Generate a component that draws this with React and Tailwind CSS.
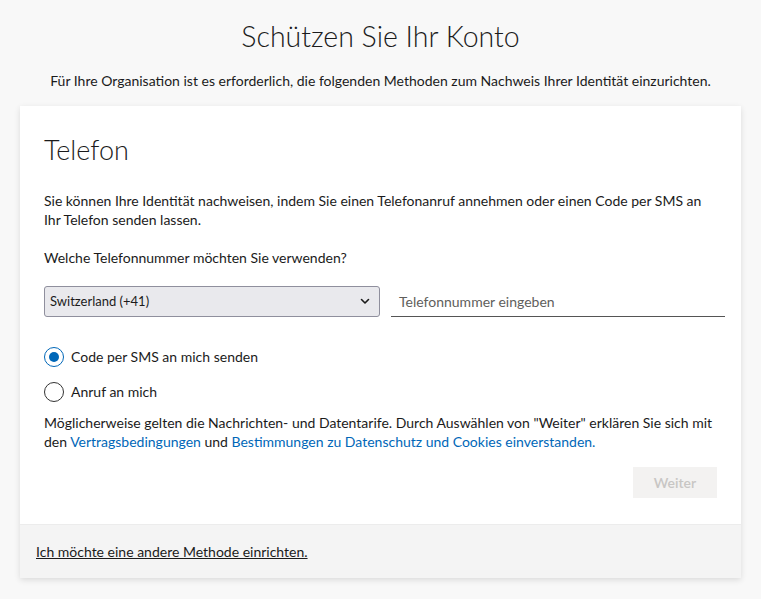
import { useState } from "react";

const FONT = { fontFamily: '"Segoe UI", Lato, "Liberation Sans", sans-serif' };

function Radio({ checked, label, onClick }) {
    return (
        <button type="button" onClick={onClick} className="flex items-center gap-[7px] text-left">
            <span
                className={
                    "flex h-[20px] w-[20px] items-center justify-center rounded-full border-[1.5px] " +
                    (checked ? "border-[#0067b8]" : "border-[#333]")
                }
            >
                {checked ? <span className="h-[10px] w-[10px] rounded-full bg-[#0067b8]" /> : null}
            </span>
            <span className="text-[14px] text-[#1b1b1b]">{label}</span>
        </button>
    );
}

export default function App() {
    const [method, setMethod] = useState("sms");

    return (
        <div className="min-h-[599px] bg-[#f8f8f8] text-[#1b1b1b]" style={FONT}>
            <div className="flex flex-col items-center pt-[18px]">
                <h1 className="text-[28.5px] font-light leading-[36px] text-[#1b1b1b]">Schützen Sie Ihr Konto</h1>
                <p className="mt-[18px] text-[14px] leading-[18px] text-[#1b1b1b]">
                    Für Ihre Organisation ist es erforderlich, die folgenden Methoden zum Nachweis Ihrer Identität einzurichten.
                </p>
            </div>

            <div className="mx-[20px] mt-[16px] bg-white shadow-[0_2px_6px_rgba(0,0,0,0.12)]">
                <div className="pb-[26px] pl-[24px] pr-[16px] pt-[25px]">
                    <h2 className="text-[27px] font-light leading-[38px]">Telefon</h2>

                    <p className="mt-[22px] max-w-[668px] text-[14px] leading-[19px]">
                        Sie können Ihre Identität nachweisen, indem Sie einen Telefonanruf annehmen oder einen Code per SMS an Ihr Telefon senden lassen.
                    </p>

                    <p className="mt-[19px] text-[14px] leading-[19px]">Welche Telefonnummer möchten Sie verwenden?</p>

                    <div className="mt-[19px] flex items-end gap-[11px]">
                        <div className="flex h-[31px] w-[336px] items-center justify-between rounded-[3px] border border-[#8f8f9d] bg-[#e9e9ed] pl-[5px] pr-[9px]">
                            <span className="text-[13px]">Switzerland (+41)</span>
                            <svg width="10" height="7" viewBox="0 0 10 7" fill="none">
                                <path d="M1.5 1.5 5 5 8.5 1.5" stroke="#1b1b1b" strokeWidth="1.6" strokeLinecap="round" strokeLinejoin="round" />
                            </svg>
                        </div>
                        <div className="flex h-[31px] flex-1 items-center border-b border-[#555] pl-[8px]">
                            <span className="text-[14px] text-[#605e5c]">Telefonnummer eingeben</span>
                        </div>
                    </div>

                    <div className="mt-[29px] flex flex-col gap-[14px]">
                        <Radio checked={method === "sms"} label="Code per SMS an mich senden" onClick={() => setMethod("sms")} />
                        <Radio checked={method === "call"} label="Anruf an mich" onClick={() => setMethod("call")} />
                    </div>

                    <p className="mt-[11px] max-w-[680px] text-[14px] leading-[19px]">
                        Möglicherweise gelten die Nachrichten- und Datentarife. Durch Auswählen von "Weiter" erklären Sie sich mit den{" "}
                        <span className="text-[#0067b8]">Vertragsbedingungen</span> und{" "}
                        <span className="text-[#0067b8]">Bestimmungen zu Datenschutz und Cookies einverstanden.</span>
                    </p>

                    <div className="mt-[16px] flex justify-end pr-[8px]">
                        <button
                            type="button"
                            disabled
                            className="h-[31px] w-[84px] bg-[#f3f2f1] text-[14px] font-semibold text-[#c8c6c4]"
                        >
                            Weiter
                        </button>
                    </div>
                </div>

                <div className="border-t border-[#ececec] bg-[#f4f4f4] px-[16px] pb-[15px] pt-[14px]">
                    <span className="text-[14px] leading-[20px] text-[#1b1b1b] underline">
                        Ich möchte eine andere Methode einrichten.
                    </span>
                </div>
            </div>
        </div>
    );
}
